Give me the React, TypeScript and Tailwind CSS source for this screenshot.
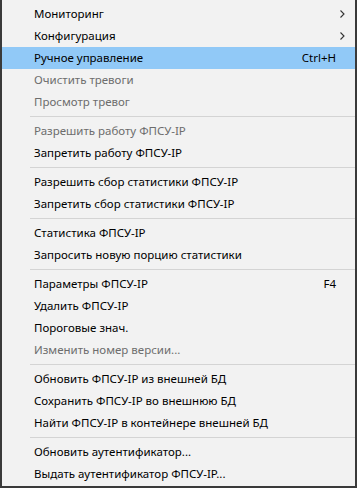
import React from "react";

type Item =
  | { sep: true }
  | { sep?: false; label: string; disabled?: boolean; shortcut?: string; sub?: boolean; active?: boolean };

const items: Item[] = [
  { label: "Мониторинг", sub: true },
  { label: "Конфигурация", sub: true },
  { label: "Ручное управление", shortcut: "Ctrl+H", active: true },
  { label: "Очистить тревоги", disabled: true },
  { label: "Просмотр тревог", disabled: true },
  { sep: true },
  { label: "Разрешить работу ФПСУ-IP", disabled: true },
  { label: "Запретить работу ФПСУ-IP" },
  { sep: true },
  { label: "Разрешить сбор статистики ФПСУ-IP" },
  { label: "Запретить сбор статистики ФПСУ-IP" },
  { sep: true },
  { label: "Статистика ФПСУ-IP" },
  { label: "Запросить новую порцию статистики" },
  { sep: true },
  { label: "Параметры ФПСУ-IP", shortcut: "F4" },
  { label: "Удалить ФПСУ-IP" },
  { label: "Пороговые знач." },
  { label: "Изменить номер версии...", disabled: true },
  { sep: true },
  { label: "Обновить ФПСУ-IP из внешней БД" },
  { label: "Сохранить ФПСУ-IP во внешнюю БД" },
  { label: "Найти ФПСУ-IP в контейнере внешней БД" },
  { sep: true },
  { label: "Обновить аутентификатор..." },
  { label: "Выдать аутентификатор ФПСУ-IP..." },
];

export default function App() {
  return (
    <div className="w-[357px] h-[488px] bg-[#f2f2f2] border-l-2 border-r-2 border-b-2 border-[#3a3a3a] pt-[3px] pb-[1px] text-[11.5px] leading-none" style={{ fontFamily: '"Noto Sans", "Open Sans", sans-serif' }}>
      {items.map((it, i) =>
        it.sep ? (
          <div key={i} className="h-[7px] pt-[3px] pl-[28px]">
            <div className="h-px bg-[#d4d4d4]" />
          </div>
        ) : (
          <div
            key={i}
            className={
              "h-[22px] flex items-center pl-[32px] pr-[19px] " +
              (it.active ? "bg-[#91c9f7] " : "") +
              (it.disabled ? "text-[#6d6d6d]" : "text-black")
            }
          >
            <span className="flex-1">{it.label}</span>
            {it.shortcut && <span>{it.shortcut}</span>}
            {it.sub && (
              <svg width="5" height="8" viewBox="0 0 5 8" className="mr-[-9px]">
                <path d="M0.5 0.5 L4 4 L0.5 7.5" fill="none" stroke="#333" strokeWidth="1.1" />
              </svg>
            )}
          </div>
        )
      )}
    </div>
  );
}
